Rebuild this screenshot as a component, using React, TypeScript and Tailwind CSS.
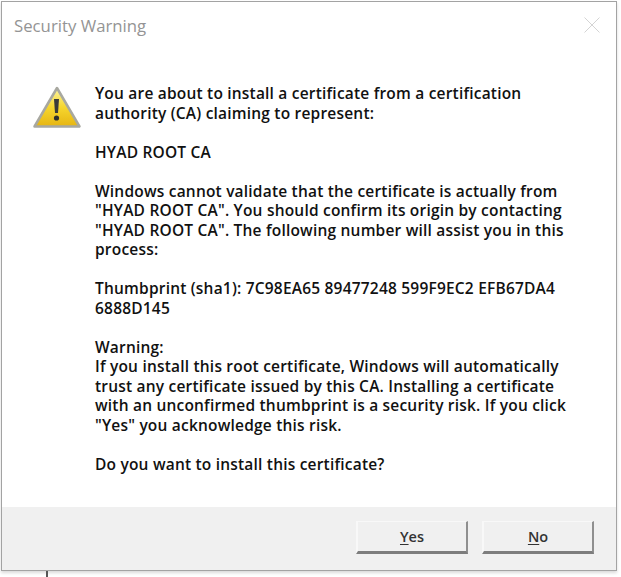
const lines: string[][] = [
  ["You are about to install a certificate from a certification", "authority (CA) claiming to represent:"],
  ["HYAD ROOT CA"],
  [
    "Windows cannot validate that the certificate is actually from",
    '"HYAD ROOT CA". You should confirm its origin by contacting',
    '"HYAD ROOT CA". The following number will assist you in this',
    "process:",
  ],
  ["Thumbprint (sha1): 7C98EA65 89477248 599F9EC2 EFB67DA4", "6888D145"],
  [
    "Warning:",
    "If you install this root certificate, Windows will automatically",
    "trust any certificate issued by this CA. Installing a certificate",
    'with an unconfirmed thumbprint is a security risk. If you click',
    '"Yes" you acknowledge this risk.',
  ],
  ["Do you want to install this certificate?"],
];

function WarningIcon() {
  return (
    <svg width="50" height="46" viewBox="0 0 50 46" className="shrink-0">
      <defs>
        <linearGradient id="warnFill" x1="0" y1="0" x2="0" y2="1">
          <stop offset="0" stopColor="#fbf3a0" />
          <stop offset="0.5" stopColor="#f6d62e" />
          <stop offset="1" stopColor="#e6b512" />
        </linearGradient>
      </defs>
      <path d="M24 3 L46.5 41.5 L1.5 41.5 Z" fill="url(#warnFill)" stroke="#a8a8a0" strokeWidth="2.5" strokeLinejoin="round" />
      <path d="M21 14 L26 14 L25 28 L22 28 Z" fill="#3a3a3a" />
      <circle cx="23.5" cy="33" r="2.6" fill="#2e2e2e" />
    </svg>
  );
}

function DialogButton({ mnemonic, rest }: { mnemonic: string; rest: string }) {
  return (
    <button className="flex h-[33px] w-[112px] items-center justify-center border-t border-l-2 border-r-2 border-b-[3px] border-t-[#f8f8f8] border-l-[#f8f8f8] border-r-[#8f8f8f] border-b-[#7d7d7d] bg-[#f0f0f0] text-[14.5px] font-semibold text-[#333]">
      <span className="underline underline-offset-2">{mnemonic}</span>
      {rest}
    </button>
  );
}

export default function App() {
  return (
    <div className="h-[577px] w-[621px] overflow-hidden bg-white font-['Open_Sans','Noto_Sans',sans-serif]">
      <div className="ml-px mt-px flex h-[570px] w-[616px] flex-col border border-[#a3a3a3] bg-white shadow-[0_2px_3px_rgba(0,0,0,0.15)]">
        <div className="flex h-[50px] shrink-0 items-center justify-between pl-[12px] pr-[16px]">
          <span className="-mt-[2px] text-[16.75px] text-[#949494]">Security Warning</span>
          <svg width="16" height="16" viewBox="0 0 16 16" className="mb-[5px]">
            <path d="M0.5 0.5 L15.5 15.5 M15.5 0.5 L0.5 15.5" stroke="#d4d4d4" strokeWidth="1" fill="none" />
          </svg>
        </div>
        <div className="flex flex-1 gap-[12px] pl-[31px] pt-[32px]">
          <div className="mt-px">
            <WarningIcon />
          </div>
          <div className="flex flex-col gap-[19.5px] text-[15.5px] font-semibold leading-[19.5px] tracking-[0.2px] text-[#111]">
            {lines.map((para, i) => (
              <div key={i}>
                {para.map((l, j) => (
                  <div key={j} className="whitespace-nowrap">
                    {l}
                  </div>
                ))}
              </div>
            ))}
          </div>
        </div>
        <div className="flex h-[63px] shrink-0 justify-end gap-[14px] bg-[#f0f0f0] pr-[22px] pt-[14px]">
          <DialogButton mnemonic="Y" rest="es" />
          <DialogButton mnemonic="N" rest="o" />
        </div>
      </div>
      <div className="ml-[46px] h-[6px] w-[2px] bg-[#555]" />
    </div>
  );
}
